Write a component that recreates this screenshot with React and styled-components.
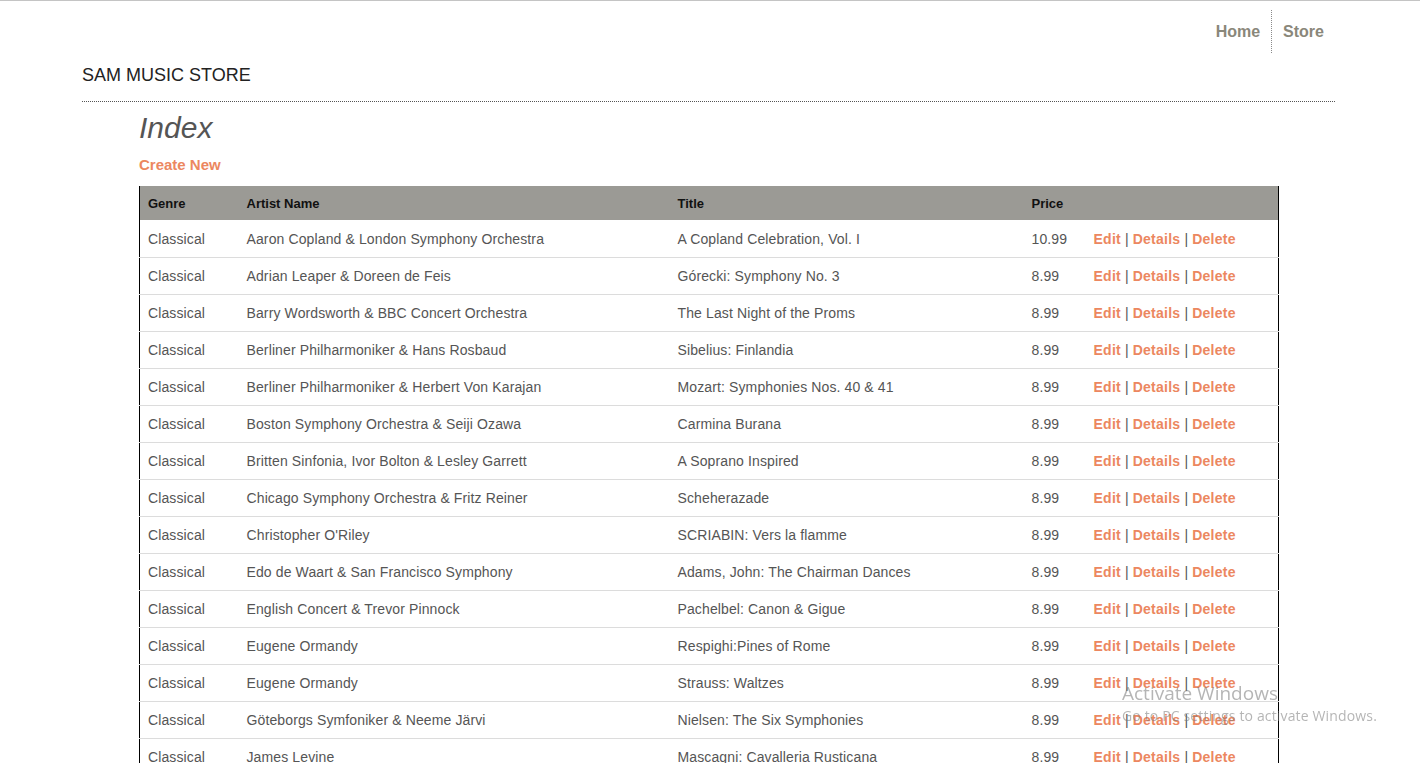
import React from "react";
import styled, { createGlobalStyle } from "styled-components";

const GlobalStyle = createGlobalStyle`
  html, body { margin: 0; padding: 0; background: #fff; }
  body { font-family: "Liberation Sans", Arial, sans-serif; color: #555; }
  * { box-sizing: border-box; }
`;

const Page = styled.div`
  border-top: 1px solid #c4c4c4;
  padding: 0 85px 0 82px;
`;

const Header = styled.header`
  border-bottom: 1px dotted #555;
  padding-bottom: 15px;
`;

const NavList = styled.ul`
  list-style: none;
  margin: 9px 0 0;
  padding: 0;
  display: flex;
  justify-content: flex-end;
`;

const NavItem = styled.li`
  padding: 0 11px;
  line-height: 43px;
  border-right: ${(p) => (p.$divider ? "1px dotted #8a8a8a" : "none")};
`;

const NavLink = styled.a`
  font-size: 16px;
  font-weight: bold;
  color: #8a877a;
  text-decoration: none;
`;

const SiteTitle = styled.h1`
  margin: 11px 0 0;
  font-size: 18px;
  line-height: 22px;
  font-weight: normal;
  color: #222;
`;

const Main = styled.main`
  padding-left: 57px;
`;

const PageTitle = styled.h2`
  margin: 8px 0 0;
  font-size: 30px;
  line-height: 36px;
  font-style: italic;
  font-weight: normal;
  color: #555;
`;

const CreateLink = styled.a`
  display: block;
  margin-top: 10px;
  font-size: 15px;
  line-height: 18px;
  font-weight: bold;
  color: #ec8760;
  text-decoration: none;
`;

const Table = styled.table`
  margin-top: 12px;
  width: 1140px;
  table-layout: fixed;
  border-collapse: collapse;
  border-left: 1px solid #000;
  border-right: 1px solid #000;
`;

const HeadRow = styled.tr`
  background: #9b9a95;
  height: 34px;
`;

const Th = styled.th`
  text-align: left;
  padding: 0 8px;
  font-size: 13px;
  font-weight: bold;
  color: #111;
`;

const Row = styled.tr`
  height: 37px;
  border-bottom: 1px solid #dcdcdc;
`;

const Td = styled.td`
  padding: 1px 8px 0;
  font-size: 14px;
  letter-spacing: 0.12px;
  color: #555;
  white-space: nowrap;
  overflow: hidden;
`;

const ActionLink = styled.a`
  font-weight: bold;
  letter-spacing: 0.25px;
  color: #ec8760;
  text-decoration: none;
`;

const Sep = styled.span`
  color: #555;
  margin: 0 4px;
`;

const Watermark = styled.div`
  position: fixed;
  left: 1122px;
  top: 681px;
  color: rgba(120, 120, 120, 0.55);
  font-family: "Open Sans", "Noto Sans", sans-serif;
  pointer-events: none;
`;

const WatermarkTitle = styled.div`
  font-size: 19px;
  line-height: 24px;
`;

const WatermarkText = styled.div`
  font-size: 14px;
  line-height: 21px;
  letter-spacing: 0.15px;
`;

const albums = [
  ["Aaron Copland & London Symphony Orchestra", "A Copland Celebration, Vol. I", "10.99"],
  ["Adrian Leaper & Doreen de Feis", "Górecki: Symphony No. 3", "8.99"],
  ["Barry Wordsworth & BBC Concert Orchestra", "The Last Night of the Proms", "8.99"],
  ["Berliner Philharmoniker & Hans Rosbaud", "Sibelius: Finlandia", "8.99"],
  ["Berliner Philharmoniker & Herbert Von Karajan", "Mozart: Symphonies Nos. 40 & 41", "8.99"],
  ["Boston Symphony Orchestra & Seiji Ozawa", "Carmina Burana", "8.99"],
  ["Britten Sinfonia, Ivor Bolton & Lesley Garrett", "A Soprano Inspired", "8.99"],
  ["Chicago Symphony Orchestra & Fritz Reiner", "Scheherazade", "8.99"],
  ["Christopher O'Riley", "SCRIABIN: Vers la flamme", "8.99"],
  ["Edo de Waart & San Francisco Symphony", "Adams, John: The Chairman Dances", "8.99"],
  ["English Concert & Trevor Pinnock", "Pachelbel: Canon & Gigue", "8.99"],
  ["Eugene Ormandy", "Respighi:Pines of Rome", "8.99"],
  ["Eugene Ormandy", "Strauss: Waltzes", "8.99"],
  ["Göteborgs Symfoniker & Neeme Järvi", "Nielsen: The Six Symphonies", "8.99"],
  ["James Levine", "Mascagni: Cavalleria Rusticana", "8.99"],
  ["Kent Nagano and Orchestre de l'Opéra de Lyon", "Szymanowski: Piano Works, Vol. 1", "8.99"],
];

export default function App() {
  return (
    <Page>
      <GlobalStyle />
      <Header>
        <nav>
          <NavList>
            <NavItem $divider>
              <NavLink href="#">Home</NavLink>
            </NavItem>
            <NavItem>
              <NavLink href="#">Store</NavLink>
            </NavItem>
          </NavList>
        </nav>
        <SiteTitle>SAM MUSIC STORE</SiteTitle>
      </Header>
      <Main>
        <PageTitle>Index</PageTitle>
        <CreateLink href="#">Create New</CreateLink>
        <Table>
          <colgroup>
            <col style={{ width: 99 }} />
            <col style={{ width: 431 }} />
            <col style={{ width: 354 }} />
            <col style={{ width: 62 }} />
            <col />
          </colgroup>
          <thead>
            <HeadRow>
              <Th>Genre</Th>
              <Th>Artist Name</Th>
              <Th>Title</Th>
              <Th>Price</Th>
              <Th />
            </HeadRow>
          </thead>
          <tbody>
            {albums.map(([artist, title, price], i) => (
              <Row key={i}>
                <Td>Classical</Td>
                <Td>{artist}</Td>
                <Td>{title}</Td>
                <Td>{price}</Td>
                <Td>
                  <ActionLink href="#">Edit</ActionLink>
                  <Sep>|</Sep>
                  <ActionLink href="#">Details</ActionLink>
                  <Sep>|</Sep>
                  <ActionLink href="#">Delete</ActionLink>
                </Td>
              </Row>
            ))}
          </tbody>
        </Table>
      </Main>
      <Watermark>
        <WatermarkTitle>Activate Windows</WatermarkTitle>
        <WatermarkText>Go to PC settings to activate Windows.</WatermarkText>
      </Watermark>
    </Page>
  );
}
